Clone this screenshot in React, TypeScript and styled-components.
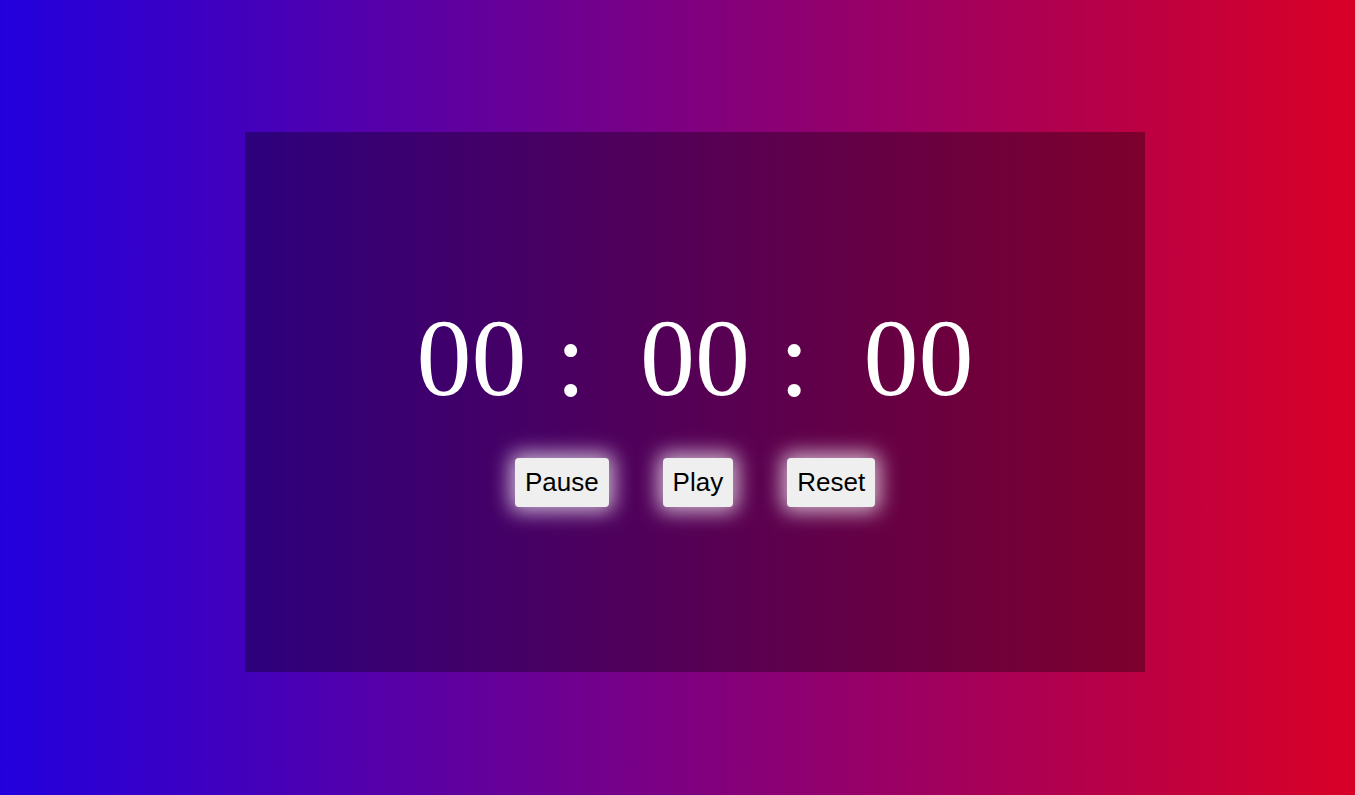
import React from "react";
import styled, { createGlobalStyle } from "styled-components";

const Global = createGlobalStyle`
  html, body { margin: 0; padding: 0; }
  body {
    width: 1355px;
    height: 795px;
    overflow: hidden;
    background: linear-gradient(to right, #2200dd, #d90026);
    font-family: "Liberation Serif", "Times New Roman", serif;
  }
`;

const Page = styled.main`
  box-sizing: border-box;
  height: 795px;
  padding: 132px 0 0 245px;
`;

const Card = styled.section`
  width: 900px;
  height: 540px;
  background: rgba(0, 0, 0, 0.33);
  display: flex;
  flex-direction: column;
  align-items: center;
  justify-content: center;
  gap: 45px;
`;

const Clock = styled.div`
  display: flex;
  align-items: baseline;
  color: #ffffff;
  font-family: "Liberation Serif", "Times New Roman", serif;
  font-size: 110px;
  line-height: 1;
  margin-top: 6px;
`;

const Unit = styled.span``;

const Sep = styled.span`
  margin: 0 54px 0 29px;
`;

const Controls = styled.div`
  display: flex;
  gap: 54px;
`;

const Button = styled.button`
  box-sizing: border-box;
  height: 49px;
  padding: 0 10px;
  border: none;
  border-radius: 4px;
  background: #efefef;
  color: #000;
  font-family: "Liberation Sans", Arial, sans-serif;
  font-size: 26px;
  box-shadow: 0 0 20px 5px rgba(255, 255, 255, 0.7);
  cursor: pointer;
`;

export default function App() {
  return (
    <>
      <Global />
      <Page>
        <Card>
          <Clock>
            <Unit>00</Unit>
            <Sep>:</Sep>
            <Unit>00</Unit>
            <Sep>:</Sep>
            <Unit>00</Unit>
          </Clock>
          <Controls>
            <Button>Pause</Button>
            <Button>Play</Button>
            <Button>Reset</Button>
          </Controls>
        </Card>
      </Page>
    </>
  );
}
